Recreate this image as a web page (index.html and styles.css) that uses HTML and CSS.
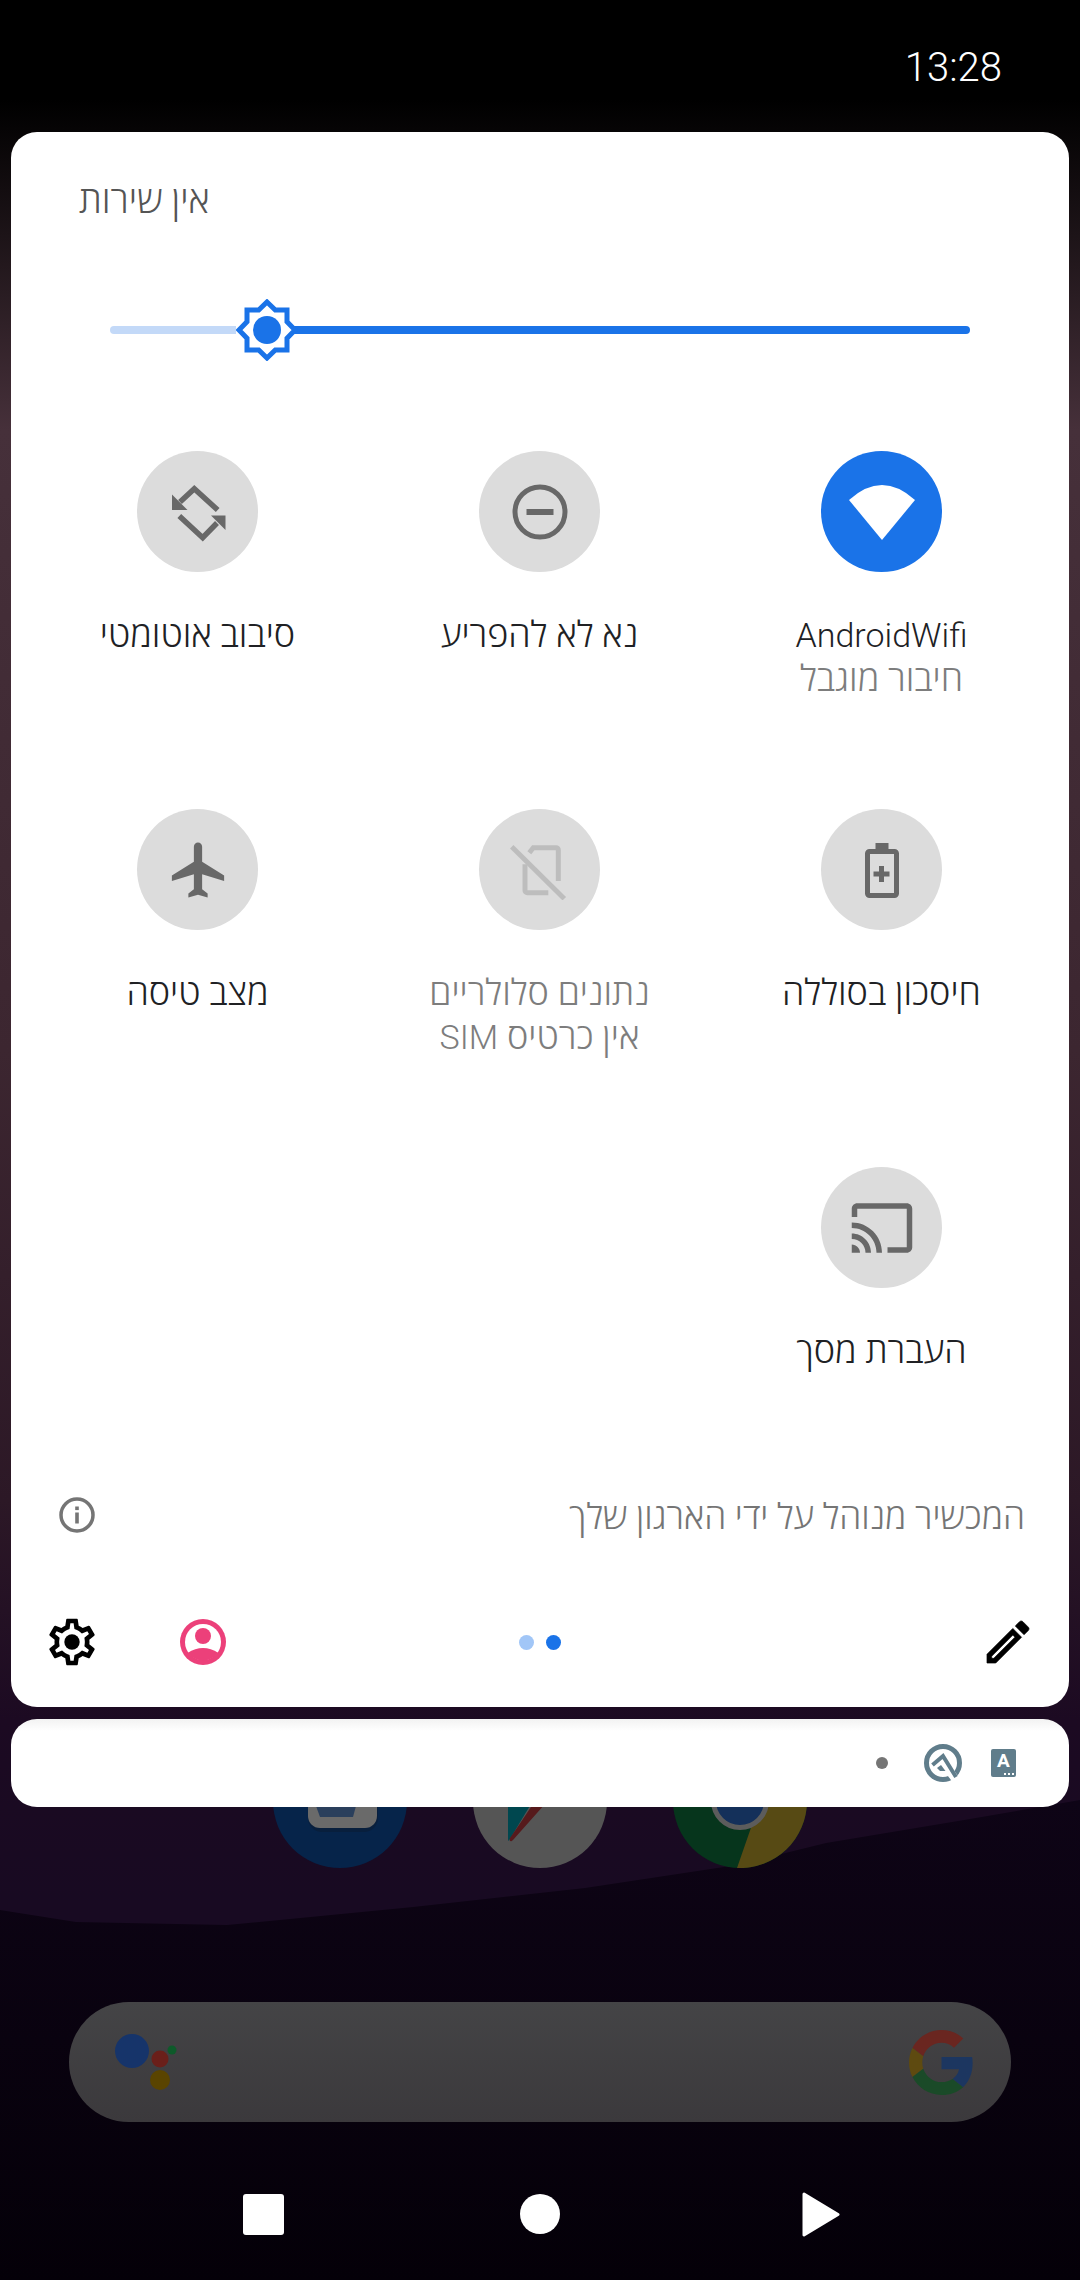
FILE: index.html
```html
<!DOCTYPE html>
<html lang="he" dir="rtl">
<head>
    <meta charset="UTF-8">
    <meta name="viewport" content="width=device-width, initial-scale=1.0">
    <title>Quick Settings</title>
    <link rel="stylesheet" href="styles.css">
</head>
<body>
    <!-- home screen behind the shade -->
    <div class="home">
        <svg class="hill" viewBox="0 0 1080 480" preserveAspectRatio="none">
            <defs>
                <linearGradient id="hillFill" x1="0" y1="0" x2="0" y2="1">
                    <stop offset="0" stop-color="#0e0416"/>
                    <stop offset="1" stop-color="#040008"/>
                </linearGradient>
            </defs>
            <path fill="url(#hillFill)" d="M0 110L76 122L227 125L413 107L585 88L737 65L826 43L964 20L1080 0V480H0Z"/>
        </svg>

        <div class="dock">
            <svg class="app" viewBox="0 0 134 134">
                <circle cx="67" cy="67" r="67" fill="#06244a"/>
                <rect x="35" y="30" width="70" height="68" rx="14" fill="#0a1c36" opacity="0.6"/>
                <rect x="35" y="20" width="69" height="74" rx="12" fill="#6a6a6a"/>
                <path d="M44 62H81L83 72L80 83H47L43 72Z" fill="#2a3f5c"/>
            </svg>
            <svg class="app" viewBox="0 0 134 134">
                <circle cx="67" cy="67" r="67" fill="#555555"/>
                <path d="M35 0H100L37 105C35 108 35 108 35 100Z" fill="#00474f"/>
                <path d="M48 88L92 22L104 34L40 106C37 109 36 106 37 104Z" fill="#561a1c"/>
                <path d="M88 27L100 12L108 24L95 36Z" fill="#5a4a10"/>
            </svg>
            <svg class="app" viewBox="0 0 134 134">
                <circle cx="67" cy="67" r="67" fill="#06351c"/>
                <path d="M67 0H134V67A67 67 0 0 1 64 134L89 62Z" fill="#574a14"/>
                <circle cx="67" cy="67" r="26.5" fill="#14305a" stroke="#5c5c5c" stroke-width="5"/>
            </svg>
        </div>

        <div class="search">
            <svg class="g-logo" viewBox="0 0 48 48">
                <path fill="#6a2620" d="M24 9.5c3.54 0 6.71 1.22 9.21 3.6l6.85-6.85C35.9 2.38 30.47 0 24 0 14.62 0 6.51 5.38 2.56 13.22l7.98 6.19C12.43 13.72 17.74 9.5 24 9.5z"/>
                <path fill="#1c3660" d="M46.98 24.55c0-1.57-.15-3.09-.38-4.55H24v9.02h12.94c-.58 2.96-2.26 5.48-4.78 7.18l7.73 6c4.51-4.18 7.09-10.36 7.09-17.65z"/>
                <path fill="#5e4a10" d="M10.53 28.59c-.48-1.45-.76-2.99-.76-4.59s.27-3.14.76-4.59l-7.98-6.19C.92 16.46 0 20.12 0 24c0 3.88.92 7.54 2.56 10.78l7.97-6.19z"/>
                <path fill="#1a4a28" d="M24 48c6.48 0 11.93-2.13 15.89-5.81l-7.73-6c-2.15 1.45-4.92 2.3-8.16 2.3-6.26 0-11.57-4.22-13.47-9.91l-7.98 6.19C6.51 42.62 14.62 48 24 48z"/>
            </svg>
            <svg class="assistant" viewBox="0 0 62 58">
                <circle cx="17" cy="18" r="17" fill="#16346a"/>
                <circle cx="45" cy="26" r="8.5" fill="#6a1f1a"/>
                <circle cx="45" cy="47" r="10" fill="#5a4400"/>
                <circle cx="57" cy="17" r="4.5" fill="#0e5a2a"/>
            </svg>
        </div>

        <div class="nav">
            <svg class="nav-back" viewBox="0 0 38 45"><path d="M2 2L36 22.5L2 43Z" fill="#fff" stroke="#fff" stroke-width="3" stroke-linejoin="round"/></svg>
            <div class="nav-home"></div>
            <div class="nav-recent"></div>
        </div>
    </div>

    <!-- notification shade on top of it -->
    <div class="shade">
        <div class="status"><span class="time" dir="ltr">13:28</span></div>

        <div class="panel">
            <div class="carrier">אין שירות</div>

            <div class="slider">
                <div class="track-on"></div>
                <svg class="thumb" viewBox="-31 -31 62 62">
                    <path d="M0 -28L8.3 -20H20V-8.3L28 0L20 8.3V20H8.3L0 28L-8.3 20H-20V8.3L-28 0L-20 -8.3V-20H-8.3Z" fill="#fff" stroke="#1a73e8" stroke-width="5"/>
                    <circle r="14" fill="#1a73e8"/>
                </svg>
                <div class="track-off"></div>
            </div>

            <div class="tiles">
                <div class="tile">
                    <div class="tile-icon on">
                        <svg class="wifi" viewBox="0 0 70 70"><path d="M2 23Q35 -7 68 23L35 63Z" fill="#fff"/></svg>
                    </div>
                    <div class="tile-label latin" dir="ltr">AndroidWifi</div>
                    <div class="tile-sub">חיבור מוגבל</div>
                </div>
                <div class="tile">
                    <div class="tile-icon">
                        <svg class="icon60" viewBox="0 0 60 60">
                            <circle cx="30" cy="30" r="25" fill="none" stroke="#686868" stroke-width="5"/>
                            <rect x="16.5" y="27" width="27" height="6" fill="#686868"/>
                        </svg>
                    </div>
                    <div class="tile-label">נא לא להפריע</div>
                </div>
                <div class="tile">
                    <div class="tile-icon">
                        <svg class="icon60" viewBox="0 0 60 60">
                            <path d="M49.7 28L26.3 6.7L12 20" fill="none" stroke="#686868" stroke-width="5.5"/>
                            <path d="M4 12.5V28H19.5Z" fill="#686868"/>
                            <path d="M11.3 34L34.7 55.7L49 41" fill="none" stroke="#686868" stroke-width="5.5"/>
                            <path d="M57.5 48V33.5H43Z" fill="#686868"/>
                        </svg>
                    </div>
                    <div class="tile-label">סיבוב אוטומטי</div>
                </div>

                <div class="tile">
                    <div class="tile-icon">
                        <svg class="icon60" viewBox="0 0 60 60">
                            <rect x="23.5" y="3" width="13" height="8" fill="#686868"/>
                            <rect x="15.5" y="11.5" width="29" height="44" rx="2" fill="none" stroke="#686868" stroke-width="5"/>
                            <path d="M27 26h5v5.5h5.5v5H32V42h-5v-5.5h-5.5v-5H27Z" fill="#686868"/>
                        </svg>
                    </div>
                    <div class="tile-label">חיסכון בסוללה</div>
                </div>
                <div class="tile">
                    <div class="tile-icon">
                        <svg class="icon60" viewBox="0 0 60 60" fill="none" stroke="#bdbdbd" stroke-width="5">
                            <path d="M1.7 6.7L54.3 58.7"/>
                            <path d="M19.3 12.7L23.3 7.7H46A2.3 2.3 0 0 1 48.3 10V41"/>
                            <path d="M15 24.3V50.4A2.3 2.3 0 0 0 17.3 52.7H38.3"/>
                        </svg>
                    </div>
                    <div class="tile-label muted">נתונים סלולריים</div>
                    <div class="tile-sub">אין כרטיס <span class="latin">SIM</span></div>
                </div>
                <div class="tile">
                    <div class="tile-icon">
                        <svg class="icon66" viewBox="-0.5 0 24 24"><path fill="#686868" d="M21 16v-2l-8-5V3.5c0-.83-.67-1.5-1.5-1.5S10 2.67 10 3.5V9l-8 5v2l8-2.5V19l-2 1.5V22l3.5-1 3.5 1v-1.5L13 19v-5.5l8 2.5z"/></svg>
                    </div>
                    <div class="tile-label">מצב טיסה</div>
                </div>

                <div class="tile">
                    <div class="tile-icon">
                        <svg class="icon66" viewBox="0 0 24 24"><path fill="#686868" d="M21 3H3c-1.1 0-2 .9-2 2v3h2V5h18v14h-7v2h7c1.1 0 2-.9 2-2V5c0-1.1-.9-2-2-2zM1 18v3h3c0-1.66-1.34-3-3-3zm0-4v2c2.76 0 5 2.24 5 5h2c0-3.87-3.13-7-7-7zm0-4v2c4.97 0 9 4.03 9 9h2c0-6.08-4.93-11-11-11z"/></svg>
                    </div>
                    <div class="tile-label">העברת מסך</div>
                </div>
            </div>

            <div class="managed">
                <span>המכשיר מנוהל על ידי הארגון שלך</span>
                <svg class="info" viewBox="0 0 36 36">
                    <circle cx="18" cy="18" r="16" fill="none" stroke="#757575" stroke-width="3.5"/>
                    <rect x="16.2" y="15.5" width="3.6" height="11" fill="#757575"/>
                    <rect x="16.2" y="9.5" width="3.6" height="3.6" fill="#757575"/>
                </svg>
            </div>

            <div class="footer">
                <div class="footer-side">
                    <svg class="pencil" viewBox="0 0 24 24"><path fill="#000" stroke="#000" stroke-width="0.3" d="M14.06 9.02l.92.92L5.92 19H5v-.92l9.06-9.06M17.66 3c-.25 0-.51.1-.7.29l-1.83 1.83 3.75 3.75 1.83-1.83c.39-.39.39-1.02 0-1.41l-2.34-2.34c-.2-.2-.45-.29-.71-.29zm-3.6 3.19L3 17.25V21h3.75L17.81 9.94l-3.75-3.75z"/></svg>
                </div>
                <div class="pager">
                    <span class="pager-dot on"></span>
                    <span class="pager-dot"></span>
                </div>
                <div class="footer-side end">
                    <svg class="user" viewBox="0 0 46 46">
                        <circle cx="23" cy="23" r="23" fill="#ec407a"/>
                        <circle cx="23" cy="23" r="18" fill="#fff"/>
                        <circle cx="23" cy="17" r="8" fill="#ec407a"/>
                        <path d="M7.5 34Q23 24 38.5 34A20 20 0 0 1 7.5 34Z" fill="#ec407a"/>
                    </svg>
                    <svg class="gear" viewBox="0 0 24 24">
                        <path fill="#000" d="M19.43 12.98c.04-.32.07-.64.07-.98 0-.34-.03-.66-.07-.98l2.11-1.65c.19-.15.24-.42.12-.64l-2-3.46c-.09-.16-.26-.25-.44-.25-.06 0-.12.01-.17.03l-2.49 1c-.52-.4-1.08-.73-1.69-.98l-.38-2.65C14.46 2.18 14.25 2 14 2h-4c-.25 0-.46.18-.49.42l-.38 2.65c-.61.25-1.17.59-1.69.98l-2.49-1c-.06-.02-.12-.03-.18-.03-.17 0-.34.09-.43.25l-2 3.46c-.13.22-.07.49.12.64l2.11 1.65c-.04.32-.07.65-.07.98 0 .33.03.66.07.98l-2.11 1.65c-.19.15-.24.42-.12.64l2 3.46c.09.16.26.25.44.25.06 0 .12-.01.17-.03l2.49-1c.52.4 1.08.73 1.69.98l.38 2.65c.03.24.24.42.49.42h4c.25 0 .46-.18.49-.42l.38-2.65c.61-.25 1.17-.59 1.69-.98l2.49 1c.06.02.12.03.18.03.17 0 .34-.09.43-.25l2-3.46c.12-.22.07-.49-.12-.64l-2.11-1.65zm-1.98-1.71c.04.31.05.52.05.73 0 .21-.02.43-.05.73l-.14 1.13.89.7 1.08.84-.7 1.21-1.27-.51-1.04-.42-.9.68c-.43.32-.84.56-1.25.73l-1.06.43-.16 1.13-.2 1.35h-1.4l-.19-1.35-.16-1.13-1.06-.43c-.43-.18-.83-.41-1.23-.71l-.91-.7-1.06.43-1.27.51-.7-1.21 1.08-.84.89-.7-.14-1.13c-.03-.31-.05-.54-.05-.74s.02-.43.05-.73l.14-1.13-.89-.7-1.08-.84.7-1.21 1.27.51 1.04.42.9-.68c.43-.32.84-.56 1.25-.73l1.06-.43.16-1.13.2-1.35h1.39l.19 1.35.16 1.13 1.06.43c.43.18.83.41 1.23.71l.91.7 1.06-.43 1.27-.51.7 1.21-1.07.85-.89.7.14 1.13z"/>
                        <circle cx="12" cy="12" r="3.3" fill="#000"/>
                    </svg>
                </div>
            </div>
        </div>

        <div class="notif-strip">
            <div class="notif-a"><span>A</span><i class="notif-dots"></i></div>
            <svg class="notif-q" viewBox="0 0 38 38">
                <circle cx="19" cy="19" r="16.5" fill="none" stroke="#607d8b" stroke-width="5"/>
                <path d="M32 36L26 28" stroke="#fff" stroke-width="8"/>
                <path d="M8.5 21L19 12L32 33" fill="none" stroke="#607d8b" stroke-width="4"/>
                <path d="M13 24L17 21L21.5 27H16Z" fill="#607d8b"/>
            </svg>
            <span class="notif-more"></span>
        </div>
    </div>
</body>
</html>
```

FILE: styles.css
```css
html, body {
    margin: 0;
    padding: 0;
}
body {
    position: relative;
    width: 1080px;
    height: 2280px;
    overflow: hidden;
    font-family: Roboto, "Open Sans", "Noto Sans", "Liberation Sans", sans-serif;
    font-weight: 300;
    background: linear-gradient(180deg, #000 0, #000 100px, #46303a 430px, #3c2630 1050px, #2c1826 1500px, #1c0a22 1720px, #180a22 1900px);
}
svg {
    display: block;
    flex: none;
}
.latin {
    font-size: 34px;
}

/* home screen */
.home {
    position: relative;
    height: 2280px;
    display: flex;
    flex-direction: column;
    justify-content: flex-end;
}
.hill {
    position: absolute;
    left: 0;
    bottom: 0;
    width: 1080px;
    height: 480px;
}
.dock {
    position: relative;
    direction: ltr;
    display: flex;
    justify-content: center;
    gap: 66px;
    margin-bottom: 134px;
}
.app {
    width: 134px;
    height: 134px;
}
.search {
    position: relative;
    height: 120px;
    margin: 0 69px;
    padding: 0 37px 0 46px;
    border-radius: 60px;
    display: flex;
    align-items: center;
    justify-content: space-between;
    background: linear-gradient(180deg, #444446, #3b393c);
}
.g-logo {
    width: 65px;
    height: 65px;
}
.assistant {
    width: 62px;
    height: 58px;
}
.nav {
    position: relative;
    height: 132px;
    padding: 26px 0 0 3px;
    display: flex;
    align-items: center;
    justify-content: center;
    gap: 236px;
}
.nav-back {
    width: 38px;
    height: 45px;
    margin-left: 6px;
}
.nav-home {
    width: 40px;
    height: 40px;
    border-radius: 50%;
    background: #fff;
}
.nav-recent {
    width: 41px;
    height: 41px;
    border-radius: 3px;
    background: #fff;
}

/* shade */
.shade {
    position: absolute;
    top: 0;
    left: 0;
    right: 0;
    padding: 0 11px;
}
.status {
    height: 132px;
    padding: 2px 67px 0;
    box-sizing: border-box;
    display: flex;
    align-items: center;
}
.time {
    font-size: 40px;
    color: #fff;
}
.panel {
    height: 1575px;
    box-sizing: border-box;
    padding-top: 47px;
    background: #fff;
    border-radius: 26px;
}
.carrier {
    line-height: 44px;
    padding: 0 68px;
    font-size: 37px;
    color: #555;
    text-align: left;
}
.slider {
    display: flex;
    align-items: center;
    margin: 76px 99px 0;
}
.track-on {
    flex: 1;
    height: 8px;
    margin-left: -10px;
    border-radius: 4px;
    background: #1a73e8;
}
.thumb {
    width: 62px;
    height: 62px;
}
.track-off {
    width: 126px;
    height: 8px;
    border-radius: 4px 0 0 4px;
    background: #c3d9f8;
}
.tiles {
    display: grid;
    grid-template-columns: repeat(3, 342px);
    grid-template-rows: 358px 358px auto;
    margin: 90px 16.5px 0 0;
}
.tile {
    display: flex;
    flex-direction: column;
    align-items: center;
    text-align: center;
    font-size: 36px;
    line-height: 44px;
}
.tile-icon {
    width: 121px;
    height: 121px;
    margin-bottom: 41px;
    border-radius: 50%;
    background: #dcdcdc;
    display: flex;
    align-items: center;
    justify-content: center;
}
.tile-icon.on {
    background: #1a73e8;
}
.wifi {
    width: 70px;
    height: 70px;
}
.icon60 {
    width: 60px;
    height: 60px;
}
.icon66 {
    width: 66px;
    height: 66px;
}
.tile-label {
    color: #202124;
}
.tile-label.muted, .tile-sub {
    color: #7d7d7d;
}
.managed {
    display: flex;
    align-items: center;
    justify-content: space-between;
    height: 44px;
    margin-top: 120px;
    padding: 0 44px 0 48px;
    font-size: 35.5px;
    color: #757575;
}
.info {
    width: 36px;
    height: 36px;
}
.footer {
    display: grid;
    grid-template-columns: 1fr auto 1fr;
    align-items: center;
    height: 60px;
    margin-top: 75px;
    padding: 0 33px;
}
.footer-side {
    display: flex;
    align-items: center;
}
.footer-side.end {
    justify-content: flex-end;
    gap: 80px;
}
.pencil, .gear {
    width: 56px;
    height: 56px;
}
.user {
    width: 46px;
    height: 46px;
}
.pager {
    display: flex;
    gap: 12px;
}
.pager-dot {
    width: 15px;
    height: 15px;
    border-radius: 50%;
    background: #a1c6f7;
}
.pager-dot.on {
    background: #1a73e8;
}
.notif-strip {
    display: flex;
    align-items: center;
    gap: 29px;
    height: 88px;
    margin-top: 12px;
    padding: 0 53px;
    border-radius: 26px;
    background: linear-gradient(180deg, #f2f2f2, #fff 12px);
}
.notif-a {
    position: relative;
    width: 25px;
    height: 28px;
    border-radius: 2px;
    background: #607d8b;
    color: #fff;
    font-size: 19px;
    font-weight: 700;
    line-height: 24px;
    text-align: center;
}
.notif-dots {
    position: absolute;
    right: 2px;
    bottom: 2px;
    width: 10px;
    height: 2px;
    background: repeating-linear-gradient(90deg, #fff 0, #fff 2px, transparent 2px, transparent 4px);
}
.notif-q {
    width: 38px;
    height: 38px;
}
.notif-more {
    width: 12px;
    height: 12px;
    margin-right: 7px;
    border-radius: 50%;
    background: #757575;
}
```
